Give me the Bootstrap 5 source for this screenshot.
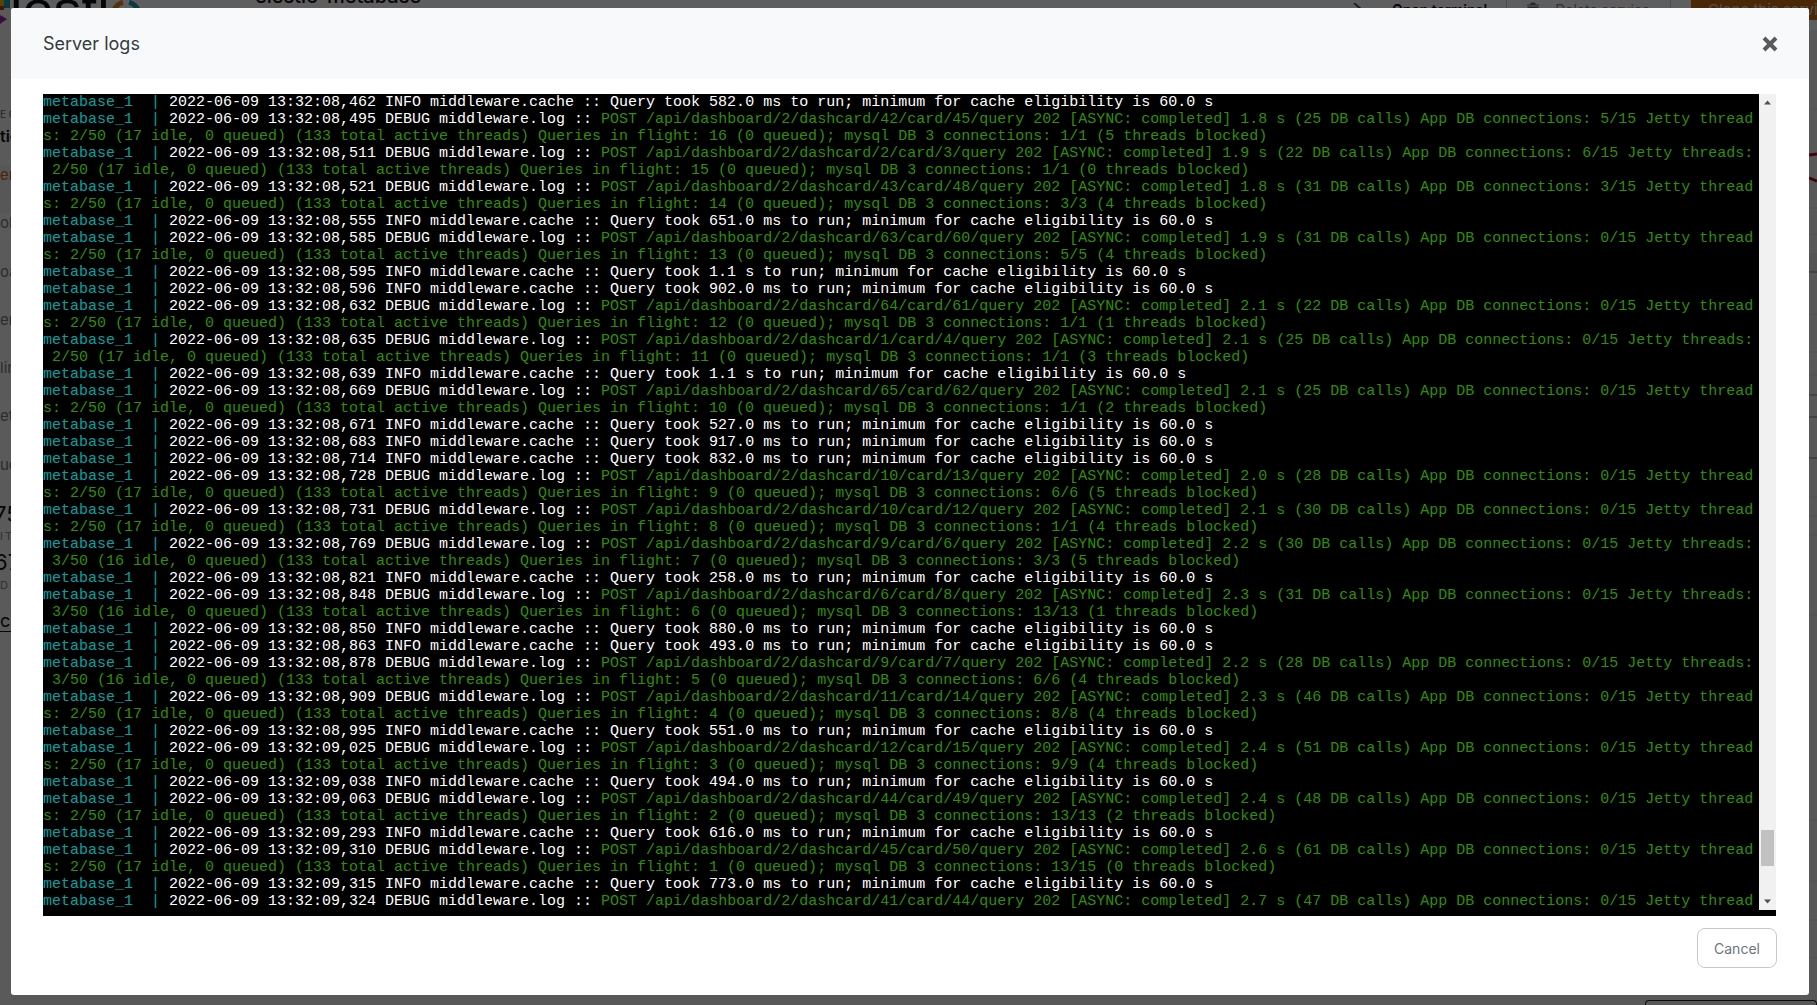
<!DOCTYPE html>
<html lang="en">
<head>
<meta charset="utf-8">
<title>Server logs</title>
<link rel="stylesheet" href="https://cdn.jsdelivr.net/npm/bootstrap@5.3.0/dist/css/bootstrap.min.css">
<style>
html,body{height:100%;overflow:hidden}
body{background:#fff;font-family:Inter,"Liberation Sans",sans-serif}
.modal-backdrop{--bs-backdrop-opacity:.63}
.pagewrap{height:1005px;background:#eee}
.topstrip{height:30px;background:#fff;overflow:hidden}
.logo-ic{width:10px;flex:none}
.logo-word{width:190px;height:70px;flex:none;font:400 56px/56px "Liberation Sans",sans-serif;color:#111;margin-top:-18px;white-space:nowrap}
.logo-o{flex:none}
.dots{width:55px;flex:none}
.svc-title{font:500 20px/30px Inter,sans-serif;color:#111;margin-top:-19px;white-space:nowrap}
.top-act{font-size:14px;line-height:20px;white-space:nowrap}
.act-term{color:#111;font-weight:600}
.act-del{color:#888}
.vrule{width:1px;background:#ccc;height:30px;flex:none}
.term-ic{margin-right:26px;margin-top:3px}
.del-ic{margin-right:15px;margin-top:2px}
.rule-a{margin-left:19px;margin-right:19px}
.rule-b{margin-left:20px;margin-right:20px}
.clone{width:126px;flex:none;background:#c86a10;color:#ddd;font-size:15px;line-height:20px;padding:0 0 0 17px;white-space:nowrap;overflow:hidden}
.sidecut{width:11px;flex:none;overflow:hidden;font-size:15px;color:#777;background:#f3f3f3;white-space:nowrap;padding-top:74px}
.sidecut div{height:48.3px;line-height:20px}
.sidecut .cut-e{height:22px;font-size:10px;color:#666}
.sidecut .cut-ti{height:39px;color:#111;font-weight:600;font-size:16px}
.sidecut .cut-o{color:#d35b1c;background:#ececec}
.sidecut .cut-75{height:23px;color:#111;font-size:22px;line-height:22px;text-indent:-6px}
.sidecut .cut-it{height:25px;font-size:11px;letter-spacing:2px;color:#888}
.sidecut .cut-6{height:24px;color:#111;font-size:22px;line-height:22px;text-indent:-6px}
.sidecut .cut-di{height:35px;font-size:11px;letter-spacing:2px;color:#888}
.sidecut .cut-cr{height:22px;color:#111;font-size:18px;line-height:21px;border-bottom:1px solid #111}
.rightcut{width:8px;flex:none}
.midrow{height:970px}
.footrow{height:5px}
.footbox{width:172px;height:5px;border:1px solid #222;border-bottom:0;border-radius:4px 4px 0 0;margin-left:auto}
.logs-dialog{max-width:1798px;width:1798px;height:987px;margin:8px 0 0 11px}
.logs-content{height:987px;border:0;border-radius:3px;background:#fff}
.logs-head{height:71px;padding:0 31px 0 32px;background:#f8f9fa;border-bottom:0;border-radius:3px 3px 0 0}
.logs-title{font-family:Inter,"Liberation Sans",sans-serif;font-size:18px;font-weight:400;color:#343a40;line-height:20px}
.xclose{border:0;background:none;padding:0;width:16px;height:16px;display:flex}
.logs-body{padding:15px 33px 0 32px;flex:none}
.term{height:822px;background:#000;padding-bottom:6px}
.termtext{width:1716px;height:816px;overflow:hidden;font:15px/17px "Liberation Mono","Courier New",monospace;color:#fff}
.ln{white-space:break-spaces;word-break:break-all;line-break:anywhere}
.cy{color:#00a3a3}
.gr{color:#2f8f00}
.fakebar{width:17px;height:816px;flex:none;background:#f1f1f1}
.barbtn{height:17px;flex:none}
.thumb{width:13px;height:36px;background:#c1c1c1;margin:auto 2px 27px}
.logs-foot{padding:12px 32px 0 0;border-top:0;justify-content:flex-end}
.cancel-btn{width:80px;height:40px;margin:0;padding:0;font-size:14px;color:#6c757d;background:#fff;border:1px solid #c6c8ca;border-radius:8px}
</style>
</head>
<body class="modal-open">

<div class="pagewrap d-flex flex-column">
  <div class="topstrip d-flex align-items-start">
    <div class="logo-ic">
      <svg width="10" height="30" viewBox="0 0 10 30"><rect width="10" height="30" fill="#f3f3f3"/><path d="M0 0h4v6H0z" fill="#e8b900"/><path d="M0 6h4v4H0z" fill="#d62a2a"/><path d="M4 0h6v8H4z" fill="#1b9db0"/><path d="M0 15l7 4-7 5z" fill="#8e2aa8"/></svg>
    </div>
    <div class="logo-word d-flex align-items-start">lesti<svg class="logo-o" width="32" height="70" viewBox="0 0 32 70"><path d="M3 33A13 13 0 0 1 13 20.400" fill="none" stroke="#e28a1c" stroke-width="5"/><path d="M19 20.400A13 13 0 0 1 29 33" fill="none" stroke="#1e9bb8" stroke-width="5"/></svg></div>
    <div class="dots">
      <svg width="45" height="10" viewBox="0 0 45 10"><g fill="#2a86c8"><circle cx="4" cy="0" r="2.4"/><circle cx="20" cy="0" r="2.4"/><circle cx="36" cy="0" r="2.4"/><circle cx="4" cy="7" r="2.8"/><circle cx="20" cy="7" r="2.8"/><circle cx="36" cy="7" r="2.8"/></g></svg>
    </div>
    <div class="svc-title">elestic-metabase</div>
    <div class="flex-grow-1"></div>
    <svg class="term-ic" width="14" height="14" viewBox="0 0 14 14"><path d="M2 0l8 7-8 7" fill="none" stroke="#555" stroke-width="2"/></svg>
    <div class="top-act act-term">Open terminal</div>
    <div class="vrule rule-a"></div>
    <svg class="del-ic" width="14" height="16" viewBox="0 0 14 16"><path d="M1 3h12M5 3V1h4v2M2 5h10v11H2z" fill="#777" stroke="#777"/></svg>
    <div class="top-act act-del">Delete service</div>
    <div class="vrule rule-b"></div>
    <div class="clone">Clone this service</div>
  </div>

  <div class="midrow d-flex">
    <div class="sidecut">
      <div class="cut-e">E C</div>
      <div class="cut-ti">tio</div>
      <div class="cut-o">er</div>
      <div>ol</div>
      <div>oa</div>
      <div>er</div>
      <div>lin</div>
      <div>et</div>
      <div>uc</div>
      <div class="cut-75">75</div>
      <div class="cut-it">IT</div>
      <div class="cut-6">67</div>
      <div class="cut-di">DI</div>
      <div class="cut-cr">cr</div>
    </div>
    <div class="flex-grow-1"></div>
    <svg class="rightcut" width="8" height="970" viewBox="0 0 8 970">
      <rect width="8" height="970" fill="#efefef"/>
      <g stroke="#d8d8d8">
        <path d="M0 79h8M0 178h8M0 204h8M0 284h8M0 322h8M0 345h8M0 387h8M0 428h8M0 467h8M0 486h8M0 505h8M0 585h8M0 790h8M0 851h8M0 890h8M0 928h8"/>
      </g>
      <path d="M0 223h8v20H0z" fill="#e4e4e4"/>
      <g stroke="#888"><path d="M0 242h8M0 365h8M0 387h8M0 428h8"/></g>
      <path d="M0 125l8-1M0 148l8 3" fill="none" stroke="#b01030" stroke-width="3"/>
    </svg>
  </div>
  <div class="footrow d-flex"><div class="footbox"></div></div>
</div>

<div class="modal-backdrop show"></div>

<div class="modal d-block" tabindex="-1" role="dialog">
  <div class="modal-dialog logs-dialog">
    <div class="modal-content logs-content">
      <div class="modal-header logs-head">
        <h5 class="modal-title logs-title">Server logs</h5>
        <button type="button" class="xclose" aria-label="Close">
          <svg width="16" height="16" viewBox="0 0 16 16"><path d="M2 2l12 12M14 2L2 14" stroke="#5a5a5a" stroke-width="4"/></svg>
        </button>
      </div>
      <div class="modal-body logs-body">
        <div class="term d-flex align-items-start">
          <div class="termtext">
<div class="ln"><span class="cy">metabase_1  | </span>2022-06-09 13:32:08,462 INFO middleware.cache :: Query took 582.0 ms to run; minimum for cache eligibility is 60.0 s</div>
<div class="ln"><span class="cy">metabase_1  | </span>2022-06-09 13:32:08,495 DEBUG middleware.log :: <span class="gr">POST /api/dashboard/2/dashcard/42/card/45/query 202 [ASYNC: completed] 1.8 s (25 DB calls) App DB connections: 5/15 Jetty threads: 2/50 (17 idle, 0 queued) (133 total active threads) Queries in flight: 16 (0 queued); mysql DB 3 connections: 1/1 (5 threads blocked)</span></div>
<div class="ln"><span class="cy">metabase_1  | </span>2022-06-09 13:32:08,511 DEBUG middleware.log :: <span class="gr">POST /api/dashboard/2/dashcard/2/card/3/query 202 [ASYNC: completed] 1.9 s (22 DB calls) App DB connections: 6/15 Jetty threads: 2/50 (17 idle, 0 queued) (133 total active threads) Queries in flight: 15 (0 queued); mysql DB 3 connections: 1/1 (0 threads blocked)</span></div>
<div class="ln"><span class="cy">metabase_1  | </span>2022-06-09 13:32:08,521 DEBUG middleware.log :: <span class="gr">POST /api/dashboard/2/dashcard/43/card/48/query 202 [ASYNC: completed] 1.8 s (31 DB calls) App DB connections: 3/15 Jetty threads: 2/50 (17 idle, 0 queued) (133 total active threads) Queries in flight: 14 (0 queued); mysql DB 3 connections: 3/3 (4 threads blocked)</span></div>
<div class="ln"><span class="cy">metabase_1  | </span>2022-06-09 13:32:08,555 INFO middleware.cache :: Query took 651.0 ms to run; minimum for cache eligibility is 60.0 s</div>
<div class="ln"><span class="cy">metabase_1  | </span>2022-06-09 13:32:08,585 DEBUG middleware.log :: <span class="gr">POST /api/dashboard/2/dashcard/63/card/60/query 202 [ASYNC: completed] 1.9 s (31 DB calls) App DB connections: 0/15 Jetty threads: 2/50 (17 idle, 0 queued) (133 total active threads) Queries in flight: 13 (0 queued); mysql DB 3 connections: 5/5 (4 threads blocked)</span></div>
<div class="ln"><span class="cy">metabase_1  | </span>2022-06-09 13:32:08,595 INFO middleware.cache :: Query took 1.1 s to run; minimum for cache eligibility is 60.0 s</div>
<div class="ln"><span class="cy">metabase_1  | </span>2022-06-09 13:32:08,596 INFO middleware.cache :: Query took 902.0 ms to run; minimum for cache eligibility is 60.0 s</div>
<div class="ln"><span class="cy">metabase_1  | </span>2022-06-09 13:32:08,632 DEBUG middleware.log :: <span class="gr">POST /api/dashboard/2/dashcard/64/card/61/query 202 [ASYNC: completed] 2.1 s (22 DB calls) App DB connections: 0/15 Jetty threads: 2/50 (17 idle, 0 queued) (133 total active threads) Queries in flight: 12 (0 queued); mysql DB 3 connections: 1/1 (1 threads blocked)</span></div>
<div class="ln"><span class="cy">metabase_1  | </span>2022-06-09 13:32:08,635 DEBUG middleware.log :: <span class="gr">POST /api/dashboard/2/dashcard/1/card/4/query 202 [ASYNC: completed] 2.1 s (25 DB calls) App DB connections: 0/15 Jetty threads: 2/50 (17 idle, 0 queued) (133 total active threads) Queries in flight: 11 (0 queued); mysql DB 3 connections: 1/1 (3 threads blocked)</span></div>
<div class="ln"><span class="cy">metabase_1  | </span>2022-06-09 13:32:08,639 INFO middleware.cache :: Query took 1.1 s to run; minimum for cache eligibility is 60.0 s</div>
<div class="ln"><span class="cy">metabase_1  | </span>2022-06-09 13:32:08,669 DEBUG middleware.log :: <span class="gr">POST /api/dashboard/2/dashcard/65/card/62/query 202 [ASYNC: completed] 2.1 s (25 DB calls) App DB connections: 0/15 Jetty threads: 2/50 (17 idle, 0 queued) (133 total active threads) Queries in flight: 10 (0 queued); mysql DB 3 connections: 1/1 (2 threads blocked)</span></div>
<div class="ln"><span class="cy">metabase_1  | </span>2022-06-09 13:32:08,671 INFO middleware.cache :: Query took 527.0 ms to run; minimum for cache eligibility is 60.0 s</div>
<div class="ln"><span class="cy">metabase_1  | </span>2022-06-09 13:32:08,683 INFO middleware.cache :: Query took 917.0 ms to run; minimum for cache eligibility is 60.0 s</div>
<div class="ln"><span class="cy">metabase_1  | </span>2022-06-09 13:32:08,714 INFO middleware.cache :: Query took 832.0 ms to run; minimum for cache eligibility is 60.0 s</div>
<div class="ln"><span class="cy">metabase_1  | </span>2022-06-09 13:32:08,728 DEBUG middleware.log :: <span class="gr">POST /api/dashboard/2/dashcard/10/card/13/query 202 [ASYNC: completed] 2.0 s (28 DB calls) App DB connections: 0/15 Jetty threads: 2/50 (17 idle, 0 queued) (133 total active threads) Queries in flight: 9 (0 queued); mysql DB 3 connections: 6/6 (5 threads blocked)</span></div>
<div class="ln"><span class="cy">metabase_1  | </span>2022-06-09 13:32:08,731 DEBUG middleware.log :: <span class="gr">POST /api/dashboard/2/dashcard/10/card/12/query 202 [ASYNC: completed] 2.1 s (30 DB calls) App DB connections: 0/15 Jetty threads: 2/50 (17 idle, 0 queued) (133 total active threads) Queries in flight: 8 (0 queued); mysql DB 3 connections: 1/1 (4 threads blocked)</span></div>
<div class="ln"><span class="cy">metabase_1  | </span>2022-06-09 13:32:08,769 DEBUG middleware.log :: <span class="gr">POST /api/dashboard/2/dashcard/9/card/6/query 202 [ASYNC: completed] 2.2 s (30 DB calls) App DB connections: 0/15 Jetty threads: 3/50 (16 idle, 0 queued) (133 total active threads) Queries in flight: 7 (0 queued); mysql DB 3 connections: 3/3 (5 threads blocked)</span></div>
<div class="ln"><span class="cy">metabase_1  | </span>2022-06-09 13:32:08,821 INFO middleware.cache :: Query took 258.0 ms to run; minimum for cache eligibility is 60.0 s</div>
<div class="ln"><span class="cy">metabase_1  | </span>2022-06-09 13:32:08,848 DEBUG middleware.log :: <span class="gr">POST /api/dashboard/2/dashcard/6/card/8/query 202 [ASYNC: completed] 2.3 s (31 DB calls) App DB connections: 0/15 Jetty threads: 3/50 (16 idle, 0 queued) (133 total active threads) Queries in flight: 6 (0 queued); mysql DB 3 connections: 13/13 (1 threads blocked)</span></div>
<div class="ln"><span class="cy">metabase_1  | </span>2022-06-09 13:32:08,850 INFO middleware.cache :: Query took 880.0 ms to run; minimum for cache eligibility is 60.0 s</div>
<div class="ln"><span class="cy">metabase_1  | </span>2022-06-09 13:32:08,863 INFO middleware.cache :: Query took 493.0 ms to run; minimum for cache eligibility is 60.0 s</div>
<div class="ln"><span class="cy">metabase_1  | </span>2022-06-09 13:32:08,878 DEBUG middleware.log :: <span class="gr">POST /api/dashboard/2/dashcard/9/card/7/query 202 [ASYNC: completed] 2.2 s (28 DB calls) App DB connections: 0/15 Jetty threads: 3/50 (16 idle, 0 queued) (133 total active threads) Queries in flight: 5 (0 queued); mysql DB 3 connections: 6/6 (4 threads blocked)</span></div>
<div class="ln"><span class="cy">metabase_1  | </span>2022-06-09 13:32:08,909 DEBUG middleware.log :: <span class="gr">POST /api/dashboard/2/dashcard/11/card/14/query 202 [ASYNC: completed] 2.3 s (46 DB calls) App DB connections: 0/15 Jetty threads: 2/50 (17 idle, 0 queued) (133 total active threads) Queries in flight: 4 (0 queued); mysql DB 3 connections: 8/8 (4 threads blocked)</span></div>
<div class="ln"><span class="cy">metabase_1  | </span>2022-06-09 13:32:08,995 INFO middleware.cache :: Query took 551.0 ms to run; minimum for cache eligibility is 60.0 s</div>
<div class="ln"><span class="cy">metabase_1  | </span>2022-06-09 13:32:09,025 DEBUG middleware.log :: <span class="gr">POST /api/dashboard/2/dashcard/12/card/15/query 202 [ASYNC: completed] 2.4 s (51 DB calls) App DB connections: 0/15 Jetty threads: 2/50 (17 idle, 0 queued) (133 total active threads) Queries in flight: 3 (0 queued); mysql DB 3 connections: 9/9 (4 threads blocked)</span></div>
<div class="ln"><span class="cy">metabase_1  | </span>2022-06-09 13:32:09,038 INFO middleware.cache :: Query took 494.0 ms to run; minimum for cache eligibility is 60.0 s</div>
<div class="ln"><span class="cy">metabase_1  | </span>2022-06-09 13:32:09,063 DEBUG middleware.log :: <span class="gr">POST /api/dashboard/2/dashcard/44/card/49/query 202 [ASYNC: completed] 2.4 s (48 DB calls) App DB connections: 0/15 Jetty threads: 2/50 (17 idle, 0 queued) (133 total active threads) Queries in flight: 2 (0 queued); mysql DB 3 connections: 13/13 (2 threads blocked)</span></div>
<div class="ln"><span class="cy">metabase_1  | </span>2022-06-09 13:32:09,293 INFO middleware.cache :: Query took 616.0 ms to run; minimum for cache eligibility is 60.0 s</div>
<div class="ln"><span class="cy">metabase_1  | </span>2022-06-09 13:32:09,310 DEBUG middleware.log :: <span class="gr">POST /api/dashboard/2/dashcard/45/card/50/query 202 [ASYNC: completed] 2.6 s (61 DB calls) App DB connections: 0/15 Jetty threads: 2/50 (17 idle, 0 queued) (133 total active threads) Queries in flight: 1 (0 queued); mysql DB 3 connections: 13/15 (0 threads blocked)</span></div>
<div class="ln"><span class="cy">metabase_1  | </span>2022-06-09 13:32:09,315 INFO middleware.cache :: Query took 773.0 ms to run; minimum for cache eligibility is 60.0 s</div>
<div class="ln"><span class="cy">metabase_1  | </span>2022-06-09 13:32:09,324 DEBUG middleware.log :: <span class="gr">POST /api/dashboard/2/dashcard/41/card/44/query 202 [ASYNC: completed] 2.7 s (47 DB calls) App DB connections: 0/15 Jetty thread</span></div>
          </div>
          <div class="fakebar d-flex flex-column">
            <svg class="barbtn" width="17" height="17" viewBox="0 0 17 17"><path d="M5 10.5h7L8.5 6.5z" fill="#505050"/></svg>
            <div class="thumb"></div>
            <svg class="barbtn" width="17" height="17" viewBox="0 0 17 17"><path d="M5 6.5h7l-3.5 4z" fill="#505050"/></svg>
          </div>
        </div>
      </div>
      <div class="modal-footer logs-foot">
        <button type="button" class="btn cancel-btn">Cancel</button>
      </div>
    </div>
  </div>
</div>

<script src="https://cdn.jsdelivr.net/npm/bootstrap@5.3.0/dist/js/bootstrap.bundle.min.js"></script>
</body>
</html>
